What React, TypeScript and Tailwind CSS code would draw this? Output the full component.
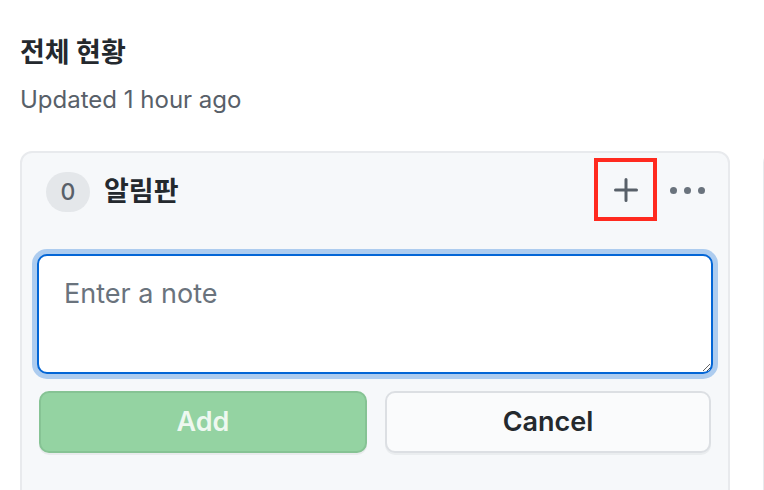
import React from "react";

export default function App() {
  return (
    <div
      className="w-[764px] h-[490px] bg-white overflow-hidden"
      style={{ fontFamily: 'Inter, "Noto Sans CJK KR", sans-serif' }}
    >
      <div className="pl-[20px] pt-[35px]">
        <h1 className="text-[27px] leading-[36px] font-bold text-[#24292e]">전체 현황</h1>
        <p className="mt-[13px] text-[24px] leading-[32px] text-[#586069]">Updated 1 hour ago</p>
      </div>
      <div className="flex gap-[33px] pl-[20px] mt-[35px]">
        <div className="w-[710px] shrink-0 h-[400px] bg-[#f6f8fa] border-2 border-[#e8eaed] rounded-[12px]">
          <div className="flex items-center pl-[24px] pr-[23px] pt-[5px]">
            <div className="flex items-center pt-[5px]">
              <span className="w-[44px] h-[40px] rounded-full bg-[#e4e7ea] text-[#586069] text-[23px] font-medium flex items-center justify-center">
                0
              </span>
              <span className="ml-[14px] text-[27px] font-bold text-[#24292e]">알림판</span>
            </div>
            <div className="ml-auto flex items-center">
              <button className="w-[63px] h-[63px] border-[4px] border-[#ff2a1f] flex items-center justify-center mr-[13px]">
                <svg width="24" height="24" viewBox="0 0 24 24">
                  <path d="M12 1.5v21M1.5 12h21" stroke="#586069" strokeWidth="3" strokeLinecap="round" fill="none" />
                </svg>
              </button>
              <div className="flex gap-[7px] items-center pt-[2px]">
                <span className="w-[7px] h-[7px] rounded-full bg-[#6a737d]" />
                <span className="w-[7px] h-[7px] rounded-full bg-[#6a737d]" />
                <span className="w-[7px] h-[7px] rounded-full bg-[#6a737d]" />
              </div>
            </div>
          </div>
          <div className="px-[15px] mt-[33px]">
            <textarea
              readOnly
              placeholder="Enter a note"
              className="block w-[676px] h-[120px] rounded-[10px] bg-white border-2 border-[#0366d6] shadow-[0_0_0_5px_rgba(3,102,214,0.3)] outline-none px-[25px] pt-[20px] text-[27px] leading-[36px] text-[#24292e] placeholder:text-[#6a737d]"
            />
            <div className="flex gap-[18px] mt-[17px] pl-[2px]">
              <button className="w-[328px] h-[62px] rounded-[10px] bg-[#94d3a2] border-2 border-[#86c394] text-[27px] font-semibold text-[rgba(255,255,255,0.85)] shadow-[0_2px_0_rgba(27,31,35,0.06)]">
                Add
              </button>
              <button className="w-[326px] h-[62px] rounded-[10px] bg-[#fafbfc] border-2 border-[#dcdfe3] text-[27px] font-semibold text-[#24292e] shadow-[0_2px_0_rgba(27,31,35,0.05)]">
                Cancel
              </button>
            </div>
          </div>
        </div>
        <div className="w-[200px] shrink-0 h-[400px] bg-[#f6f8fa] border-2 border-[#e8eaed] rounded-[12px]" />
      </div>
    </div>
  );
}
